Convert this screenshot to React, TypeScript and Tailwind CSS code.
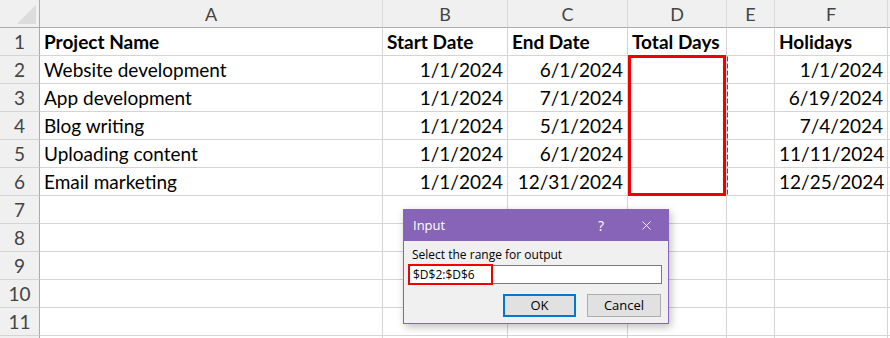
import { X } from "lucide-react"

const COLS = ["A", "B", "C", "D", "E", "F"]

interface Row {
  name: string
  start: string
  end: string
  holiday: string
}

const ROWS: Row[] = [
  { name: "Website development", start: "1/1/2024", end: "6/1/2024", holiday: "1/1/2024" },
  { name: "App development", start: "1/1/2024", end: "7/1/2024", holiday: "6/19/2024" },
  { name: "Blog writing", start: "1/1/2024", end: "5/1/2024", holiday: "7/4/2024" },
  { name: "Uploading content", start: "1/1/2024", end: "6/1/2024", holiday: "11/11/2024" },
  { name: "Email marketing", start: "1/1/2024", end: "12/31/2024", holiday: "12/25/2024" },
]

const grid = "grid grid-cols-[40px_343px_125px_120px_99px_48px_113px_1fr]"
const cell = "h-[28px] border-r border-b border-[#d4d4d4] px-[4px] leading-[27px] whitespace-nowrap overflow-hidden"
const rowHead =
  "h-[28px] border-r border-b border-r-[#ababab] border-b-[#d4d4d4] bg-[#f0f0f0] text-center leading-[28px] text-[#444]"

function DataRow({ n, cells, bold }: { n?: number; cells: (string | undefined)[]; bold?: boolean }) {
  const align = ["text-left", "text-right", "text-right", "text-left", "text-left", "text-right"]
  return (
    <>
      <div className={rowHead}>{n}</div>
      {cells.map((v, i) => (
        <div
          key={i}
          className={`${cell} ${bold ? "font-bold text-left" : align[i]} text-black`}
        >
          {v}
        </div>
      ))}
      <div className={cell} />
    </>
  )
}

export default function App() {
  const empty = [undefined, undefined, undefined, undefined, undefined, undefined]
  return (
    <div className="relative h-[338px] w-[890px] overflow-hidden bg-white font-['Lato',sans-serif] text-[19px]">
      <div className={grid}>
        {/* corner */}
        <div className="relative h-[28px] border-r border-b border-[#ababab] bg-[#f0f0f0]">
          <svg className="absolute top-[5px] left-[17px]" width="19" height="19">
            <polygon points="19,0 19,19 0,19" fill="#dcdcdc" />
          </svg>
        </div>
        {COLS.map((c) => (
          <div
            key={c}
            className="h-[28px] border-r border-b border-r-[#dadada] border-b-[#ababab] bg-[#f0f0f0] text-center leading-[28px] text-[18px] text-[#444]"
          >
            {c}
          </div>
        ))}
        <div className="h-[28px] border-b border-[#ababab] bg-[#f0f0f0]" />

        <DataRow n={1} bold cells={["Project Name", "Start Date", "End Date", "Total Days", "", "Holidays"]} />
        {ROWS.map((r, i) => (
          <DataRow key={r.name} n={i + 2} cells={[r.name, r.start, r.end, "", "", r.holiday]} />
        ))}
        {[7, 8, 9, 10, 11].map((n) => (
          <DataRow key={n} n={n} cells={empty} />
        ))}
        <DataRow cells={empty} />
      </div>

      {/* copy marquee + highlight on D2:D6 */}
      <svg className="absolute top-[55px] left-[628px]" width="100" height="142">
        <rect x="1.5" y="1.5" width="98" height="138" fill="none" stroke="#217346" strokeWidth="1" strokeDasharray="5 2" />
      </svg>
      <div className="absolute top-[55px] left-[628px] h-[141px] w-[98px] border-[3px] border-[#f00000]" />

      {/* Input dialog */}
      <div className="absolute top-[209px] left-[403px] w-[266px] border border-[#8764b8] bg-[#f0f0f0] font-['Open_Sans',sans-serif] shadow-[2px_3px_8px_rgba(0,0,0,0.25)]">
        <div className="flex h-[31px] items-center bg-[#8764b8] pl-[9px] text-[13px] text-white">
          <span>Input</span>
          <span className="ml-auto mr-[35px] text-[14px]">?</span>
          <X className="mr-[14px] h-[15px] w-[15px]" strokeWidth={1.4} />
        </div>
        <div className="px-[4px] pt-[6px] pb-[6px] text-[12px] text-black">
          <div className="pl-[4px] leading-[16px]">Select the range for output</div>
          <div className="relative mt-[2px] mr-[2px] h-[19px] border border-[#7a7a7a] bg-white pl-[4px] text-[12px] leading-[17px]">
            $D$2:$D$6
            <div className="absolute -top-[2px] -left-[1px] h-[21px] w-[85px] border-2 border-[#f00000]" />
          </div>
          <div className="mt-[10px] flex justify-end gap-[11px] pr-[3px]">
            <button className="h-[23px] w-[73px] border-2 border-[#0078d7] bg-[#e1e1e1] text-[13px] leading-[19px]">OK</button>
            <button className="h-[23px] w-[74px] border border-[#adadad] bg-[#e1e1e1] text-[13px] leading-[21px]">Cancel</button>
          </div>
        </div>
      </div>
    </div>
  )
}
